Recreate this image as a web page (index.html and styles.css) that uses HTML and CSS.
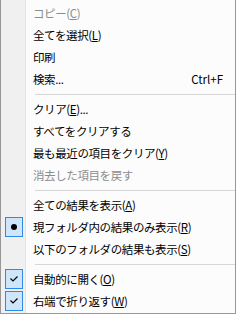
FILE: index.html
```html
<!DOCTYPE html>
<html lang="ja">
<head>
    <meta charset="UTF-8">
    <title>メニュー</title>
    <link rel="stylesheet" href="styles.css">
</head>
<body>
    <div class="menu">
        <div class="item disabled"><span class="mark"></span><span class="label">コピー(<u>C</u>)</span></div>
        <div class="item"><span class="mark"></span><span class="label">全てを選択(<u>L</u>)</span></div>
        <div class="item"><span class="mark"></span><span class="label">印刷</span></div>
        <div class="item"><span class="mark"></span><span class="label">検索...</span><span class="shortcut">Ctrl+F</span></div>
        <div class="sep"></div>
        <div class="item"><span class="mark"></span><span class="label">クリア(<u>E</u>)...</span></div>
        <div class="item"><span class="mark"></span><span class="label">すべてをクリアする</span></div>
        <div class="item"><span class="mark"></span><span class="label">最も最近の項目をクリア(<u>Y</u>)</span></div>
        <div class="item disabled"><span class="mark"></span><span class="label">消去した項目を戻す</span></div>
        <div class="sep"></div>
        <div class="item"><span class="mark"></span><span class="label">全ての結果を表示(<u>A</u>)</span></div>
        <div class="item"><span class="mark on"><span class="dot"></span></span><span class="label">現フォルダ内の結果のみ表示(<u>R</u>)</span></div>
        <div class="item"><span class="mark"></span><span class="label">以下のフォルダの結果も表示(<u>S</u>)</span></div>
        <div class="sep"></div>
        <div class="item">
            <span class="mark on"><svg width="8" height="6" viewBox="0 0 8 6"><polyline points="0.5,2.5 3,5 7.5,0.5" fill="none" stroke="#000" stroke-width="1.2"/></svg></span>
            <span class="label">自動的に開く(<u>O</u>)</span>
        </div>
        <div class="item">
            <span class="mark on"><svg width="8" height="6" viewBox="0 0 8 6"><polyline points="0.5,2.5 3,5 7.5,0.5" fill="none" stroke="#000" stroke-width="1.2"/></svg></span>
            <span class="label">右端で折り返す(<u>W</u>)</span>
        </div>
    </div>
</body>
</html>
```

FILE: styles.css
```css
body {
    margin: 0;
    font-family: "Noto Sans CJK JP", "Noto Sans", sans-serif;
    font-size: 11.5px;
    color: #000;
}
.menu {
    width: 236px;
    height: 314px;
    box-sizing: border-box;
    padding: 2px 0 1px;
    border: 1px solid #979797;
    border-top: none;
    background: linear-gradient(to right, #f0f0f0 24px, #e2e2e2 24px, #e2e2e2 25px, #fcfcfc 25px);
}
.item {
    display: grid;
    grid-template-columns: 25px 1fr auto;
    align-items: center;
    height: 22px;
    line-height: 22px;
}
.item.disabled {
    color: #8c8c8c;
}
.mark {
    width: 18px;
    height: 20px;
    margin-left: 4px;
    box-sizing: border-box;
    display: flex;
    align-items: center;
    justify-content: center;
}
.mark.on {
    border: 1px solid #2e8ae6;
    background: #cfe5fa;
}
.dot {
    width: 6px;
    height: 6px;
    border-radius: 50%;
    background: #000;
}
.label {
    padding-left: 7px;
    white-space: nowrap;
    letter-spacing: -0.4px;
}
.shortcut {
    padding-right: 12px;
}
.sep {
    height: 8px;
    display: flex;
    align-items: center;
    padding-left: 34px;
}
.sep::before {
    content: "";
    flex: 1;
    height: 1px;
    background: #d7d7d7;
}
```
